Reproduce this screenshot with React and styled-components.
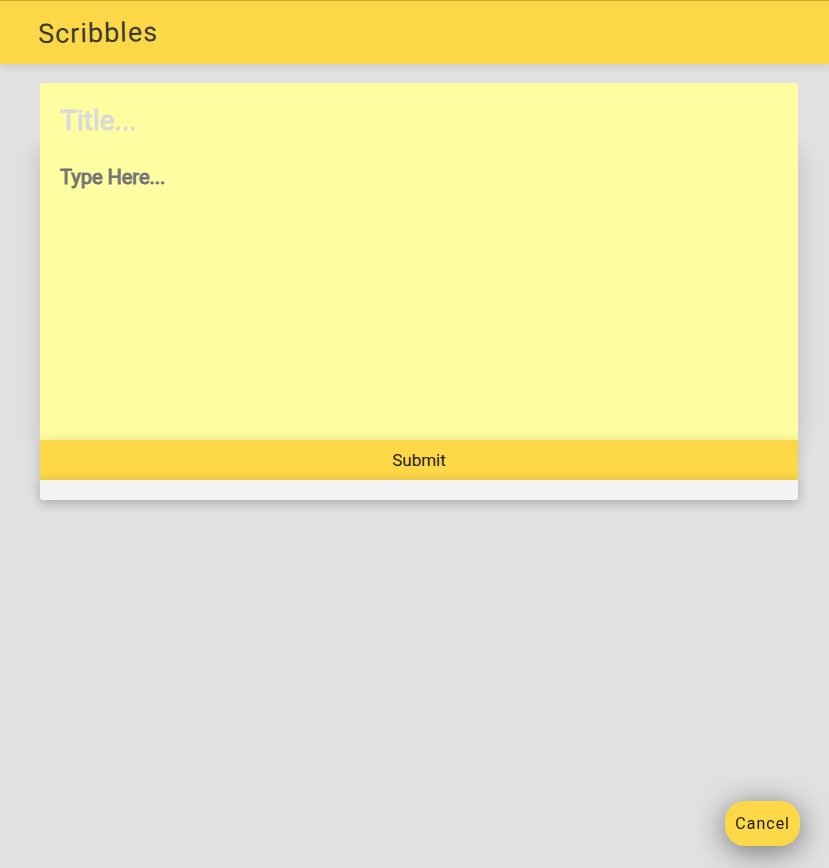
import React from "react";
import styled, { createGlobalStyle } from "styled-components";

const yellow = "#fcd748";
const note = "#fffda1";

const GlobalStyle = createGlobalStyle`
  * { box-sizing: border-box; }
  body {
    margin: 0;
    background: #e1e1e1;
    font-family: Roboto, sans-serif;
  }
`;

const Page = styled.div`
  min-height: 100vh;
  display: flex;
  flex-direction: column;
`;

const Header = styled.header`
  height: 64px;
  padding: 0 38px;
  display: flex;
  align-items: center;
  background: ${yellow};
  border-top: 1px solid #c9a92c;
  box-shadow: 0 2px 10px rgba(0, 0, 0, 0.12);
`;

const Logo = styled.h1`
  margin: 0;
  font-size: 27px;
  line-height: 36px;
  font-weight: 400;
  letter-spacing: 1px;
  color: #3a3a32;
  transform: rotate(-1deg);
`;

const NoteForm = styled.form`
  margin: 19px 31px 0 40px;
  display: flex;
  flex-direction: column;
`;

const TitleInput = styled.input`
  position: relative;
  z-index: 1;
  height: 64px;
  padding: 10px 20px 0;
  border: 0;
  border-radius: 3px 3px 0 0;
  outline: none;
  background: ${note};
  font: 400 28px Roboto, sans-serif;
  -webkit-text-stroke: 1px;
  color: #333;
  &::placeholder { color: #d9d9d9; opacity: 1; }
`;

const BodyInput = styled.textarea`
  height: 293px;
  padding: 18px 20px;
  border: 0;
  outline: none;
  resize: none;
  background: ${note};
  box-shadow: 0 2px 22px rgba(0, 0, 0, 0.16);
  font: 400 20px/24px Roboto, sans-serif;
  -webkit-text-stroke: 1px;
  color: #333;
  &::placeholder { color: #757575; opacity: 1; }
`;

const SubmitButton = styled.button`
  height: 40px;
  border: 0;
  background: ${yellow};
  box-shadow: 0 3px 14px rgba(0, 0, 0, 0.18);
  font: 400 17px Roboto, sans-serif;
  color: #1d1b0a;
  cursor: pointer;
`;

const FormFooter = styled.div`
  height: 20px;
  border-radius: 0 0 3px 3px;
  background: #f4f4f4;
  box-shadow: 0 3px 12px rgba(0, 0, 0, 0.26);
`;

const CancelButton = styled.button`
  position: fixed;
  right: 29px;
  bottom: 22px;
  height: 45px;
  padding: 0 10px;
  border: 0;
  border-radius: 20px;
  background: ${yellow};
  box-shadow: 0 5px 30px rgba(0, 0, 0, 0.5);
  font: 400 16px Roboto, sans-serif;
  letter-spacing: 1px;
  color: #1d1b0a;
  cursor: pointer;
`;

export default function App() {
  return (
    <Page>
      <GlobalStyle />
      <Header>
        <Logo>Scribbles</Logo>
      </Header>
      <main>
        <NoteForm onSubmit={(event) => event.preventDefault()}>
          <TitleInput type="text" aria-label="Title" placeholder="Title..." />
          <BodyInput aria-label="Note" placeholder="Type Here..." />
          <SubmitButton type="submit">Submit</SubmitButton>
          <FormFooter />
        </NoteForm>
      </main>
      <CancelButton type="button">Cancel</CancelButton>
    </Page>
  );
}
